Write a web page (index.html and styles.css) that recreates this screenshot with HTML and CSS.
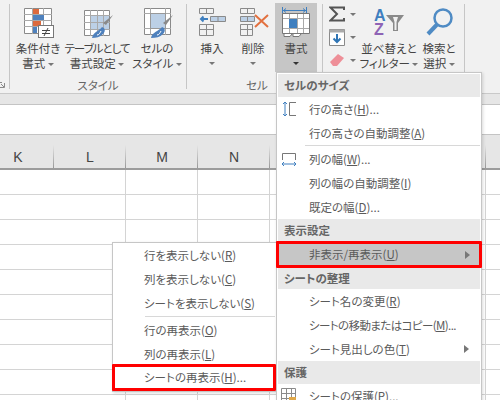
FILE: index.html
```html
<!DOCTYPE html>
<html lang="ja">
<head>
<meta charset="utf-8">
<title>Excel 書式メニュー</title>
<link rel="stylesheet" href="styles.css">
</head>
<body>
<div class="app">
  <header class="ribbon">
    <section class="group group-stub">
      <svg class="launcher" width="6" height="6" viewBox="0 0 6 6"><path d="M0 .5H3M.5 0V3M5.5 1V5.500H1M2 2L5 5" fill="none" stroke="#8a8a8a"/></svg>
    </section>
    <section class="group group-style">
      <div class="buttons">
        <div class="btn w56">
          <svg class="icon" width="32" height="32" viewBox="0 0 32 32">
            <path d="M2.500 .5H29.500V25.500H2.500Z" fill="#fff" stroke="#8a8a8a"/>
            <path d="M10.500 0V26M21.500 0V26M2 6.500H30M2 12.500H30M2 18.500H30" stroke="#a9a9a9"/>
            <rect x="11" y="1" width="6" height="5" fill="#dd6a3d"/>
            <rect x="11" y="7" width="11" height="5" fill="#4f81bd"/>
            <rect x="11" y="13" width="8" height="5" fill="#dd6a3d"/>
            <rect x="11" y="19" width="4" height="6" fill="#4f81bd"/>
            <rect x="16.500" y="17.500" width="15" height="12" fill="#fff" stroke="#777"/>
            <path d="M20 22.500H28M20 25.500H28M26 20L22 28" stroke="#444" fill="none"/>
          </svg>
          <span class="lbl">条件付き</span>
          <span class="lbl">書式 <i class="caret"></i></span>
        </div>
        <div class="btn w62">
          <svg class="icon" width="32" height="32" viewBox="0 0 32 32">
            <path d="M3.500 2.500H28.500V27.500H3.500Z" fill="#fff" stroke="#8a8a8a"/>
            <rect x="10" y="7" width="18" height="15" fill="#bcd0e6"/>
            <path d="M9.500 2V28M16.500 2V28M22.500 2V28M3 7.500H29M3 14.500H29M3 21.500H29" stroke="#a9a9a9"/>
            <path d="M32 7L25 17L22 15Z" fill="#8a8a8a"/>
            <path d="M11 30C12 24 18 23 21 19C24 20 25 23 22 26C19 29 15 30 11 30Z" fill="#4f81bd"/>
            <path d="M16 27C18 27 19 25 20 23" stroke="#fff" fill="none"/>
          </svg>
          <span class="lbl squeeze">テーブルとして</span>
          <span class="lbl">書式設定 <i class="caret"></i></span>
        </div>
        <div class="btn w58">
          <svg class="icon" width="32" height="32" viewBox="0 0 32 32">
            <path d="M3.500 .5H29.500V26.500H3.500Z" fill="#fff" stroke="#8a8a8a"/>
            <path d="M9.500 0V27M24.500 0V27M3 5.500H30M3 20.500H30" stroke="#a9a9a9"/>
            <rect x="9.500" y="5.500" width="15" height="15" fill="#bcd0e6" stroke="#999"/>
            <path d="M32 7L25 17L22 15Z" fill="#8a8a8a"/>
            <path d="M10 30C11 24 18 23 21 19C24 20 25 23 22 26C19 29 15 30 10 30Z" fill="#4f81bd"/>
            <path d="M16 27C18 27 19 25 20 23" stroke="#fff" fill="none"/>
          </svg>
          <span class="lbl">セルの</span>
          <span class="lbl">スタイル <i class="caret"></i></span>
        </div>
      </div>
      <div class="group-name">スタイル</div>
    </section>
    <section class="group group-cell">
      <div class="buttons">
        <div class="btn w40">
          <svg class="icon" width="28" height="32" viewBox="0 0 28 32">
            <path d="M1.500 .5H15.500V5.500H1.500ZM8.500 0V6" fill="none" stroke="#8a8a8a"/>
            <path d="M12.500 8.500H27.500V13.500H12.500ZM20 8V14" fill="#bcd0e6" stroke="#8a8a8a"/>
            <path d="M10 11H3M5.500 8.500L3 11L5.500 13.500" fill="none" stroke="#3f7fbf" stroke-width="2"/>
            <path d="M1.500 16.500H15.500V27.500H1.500ZM8.500 16V28M1 21.500H16" fill="none" stroke="#8a8a8a"/>
          </svg>
          <span class="lbl">挿入</span>
          <i class="caret caret-row"></i>
        </div>
        <div class="btn w42">
          <svg class="icon" width="32" height="32" viewBox="0 0 32 32">
            <path d="M3.500 .5H17.500V5.500H3.500ZM10.500 0V6" fill="none" stroke="#8a8a8a"/>
            <path d="M3.500 8.500H17.500V13.500H3.500ZM10.500 8V14" fill="#bcd0e6" stroke="#8a8a8a"/>
            <path d="M3.500 16.500H15.500V27.500H3.500ZM10.500 16V28M3 21.500H16" fill="none" stroke="#8a8a8a"/>
            <path d="M18 7L31 19M31 7L18 19" stroke="#e2703f" stroke-width="2"/>
          </svg>
          <span class="lbl">削除</span>
          <i class="caret caret-row"></i>
        </div>
        <div class="btn btn-on">
          <svg class="icon" width="32" height="33" viewBox="0 0 32 33">
            <path d="M3 6.500H26M6 4.500L3.500 6.500L6 8.500M23 4.500L25.500 6.500L23 8.500M2.500 3V10M26.500 3V10" fill="none" stroke="#3f7fbf"/>
            <path d="M2.500 9.500H29.500V29.500H2.500Z" fill="#fff" stroke="#777"/>
            <path d="M9.500 10V29M17.500 10V29M23.500 10V29M3 14.500H29M3 24.500H29" stroke="#a9a9a9"/>
            <rect x="9" y="15" width="8" height="9" fill="#3f7fbf"/>
            <path d="M4 30V32.500H10L12 30M13 30V32.500H19L21 30" fill="#fff" stroke="#777"/>
          </svg>
          <span class="lbl">書式</span>
          <i class="caret caret-row dark"></i>
        </div>
      </div>
      <div class="group-name">セル</div>
    </section>
    <section class="group group-edit">
      <div class="buttons">
        <div class="small-col">
          <div class="small">
            <svg width="16" height="16" viewBox="0 0 16 16"><path d="M15 4V1.500H1.500L8 8L1.500 14.500H15V12" fill="none" stroke="#555" stroke-width="2"/></svg>
            <i class="caret"></i>
          </div>
          <div class="small">
            <svg width="16" height="17" viewBox="0 0 16 17"><path d="M.5 .5H15.500V16.500H.5Z" fill="#fff" stroke="#8a8a8a"/><path d="M.5 .5H15.500V3.500H.5Z" fill="#aaa"/><path d="M8 5V13M4.500 9.500L8 13L11.500 9.500" fill="none" stroke="#2f75b5" stroke-width="2"/></svg>
            <i class="caret"></i>
          </div>
          <div class="small">
            <svg width="16" height="14" viewBox="0 0 16 14"><path d="M1 9L9 1L15 5L8 13H4Z" fill="#ee8f98"/></svg>
            <i class="caret"></i>
          </div>
        </div>
        <div class="btn w50">
          <svg class="icon" width="32" height="32" viewBox="0 0 32 32">
            <text class="az a" x="1" y="13">A</text>
            <text class="az z" x="1" y="27">Z</text>
            <path d="M13 7H31L25 15V23H20V15Z" fill="#8a8a8a"/>
            <path d="M20 9H25L23.500 14V22H21.500V14Z" fill="#f1f1f1"/>
          </svg>
          <span class="lbl">並べ替えと</span>
          <span class="lbl">フィルター <i class="caret"></i></span>
        </div>
        <div class="btn w50">
          <svg class="icon" width="32" height="32" viewBox="0 0 32 32">
            <circle cx="20" cy="10" r="8.500" fill="none" stroke="#4f8bc4" stroke-width="2.500"/>
            <path d="M14 16.500L5 26" stroke="#4f8bc4" stroke-width="4"/>
          </svg>
          <span class="lbl">検索と</span>
          <span class="lbl">選択 <i class="caret"></i></span>
        </div>
      </div>
    </section>
  </header>

  <div class="band"></div>
  <div class="formula"></div>

  <div class="col-head">
    <div class="col col-first">K</div>
    <div class="col">L</div>
    <div class="col">M</div>
    <div class="col">N</div>
    <div class="col"></div>
    <div class="col"></div>
    <div class="col"></div>
  </div>
  <div class="cells"></div>

  <nav class="menu menu-sub">
    <div class="item plain">行を表示しない(<u>R</u>)</div>
    <div class="item plain">列を表示しない(<u>C</u>)</div>
    <div class="item plain">シートを表示しない(<u>S</u>)</div>
    <div class="sep"></div>
    <div class="item plain">行の再表示(<u>O</u>)</div>
    <div class="item plain">列の再表示(<u>L</u>)</div>
    <div class="item plain marked">シートの再表示(<u>H</u>)...</div>
  </nav>

  <nav class="menu menu-main">
    <div class="head tall">セルのサイズ</div>
    <div class="item">
      <svg class="mi" width="16" height="16" viewBox="0 0 16 16"><path d="M4 1V15M2 3L4 1L6 3M2 13L4 15L6 13" fill="none" stroke="#3f7fbf"/><path d="M15 1.500H8.500V14.500H15" fill="none" stroke="#777"/></svg>
      行の高さ(<u>H</u>)...
    </div>
    <div class="item">行の高さの自動調整(<u>A</u>)</div>
    <div class="sep"></div>
    <div class="item">
      <svg class="mi" width="16" height="16" viewBox="0 0 16 16"><path d="M1.500 9V2.500H14.500V9" fill="none" stroke="#777"/><path d="M1 13H15M3 11L1 13L3 15M13 11L15 13L13 15" fill="none" stroke="#3f7fbf"/></svg>
      列の幅(<u>W</u>)...
    </div>
    <div class="item">列の幅の自動調整(<u>I</u>)</div>
    <div class="item">既定の幅(<u>D</u>)...</div>
    <div class="head">表示設定</div>
    <div class="item marked selected">非表示/再表示(<u>U</u>)<i class="tri"></i></div>
    <div class="head short">シートの整理</div>
    <div class="item">シート名の変更(<u>R</u>)</div>
    <div class="item tight">シートの移動またはコピー(<u>M</u>)...</div>
    <div class="item">シート見出しの色(<u>T</u>)<i class="tri"></i></div>
    <div class="head tall">保護</div>
    <div class="item">
      <svg class="mi" width="16" height="16" viewBox="0 0 16 16"><path d="M.5 .5H14.500V14.500H.5ZM5.500 0V15M10.500 0V15M0 5.500H15M0 10.500H15" fill="#fff" stroke="#8a8a8a"/><rect x="8" y="9" width="7" height="6" fill="#e0a84a"/></svg>
      シートの保護(<u>P</u>)...
    </div>
  </nav>
</div>
</body>
</html>
```

FILE: styles.css
```css
* { box-sizing: border-box; }
html, body { margin: 0; padding: 0; }
body {
  width: 500px;
  height: 400px;
  overflow: hidden;
  background: #fff;
  font-family: "Noto Sans CJK JP", "Noto Sans", sans-serif;
  font-size: 11.5px;
  color: #555;
  font-feature-settings: "palt";
}
.app { position: relative; width: 500px; height: 400px; overflow: hidden; }

/* ribbon */
.ribbon {
  display: flex;
  height: 94px;
  background: #f1f1f1;
  border-bottom: 1px solid #c9c9c9;
}
.group {
  display: flex;
  flex-direction: column;
  border-right: 1px solid #c6c6c6;
  margin: 4px 0;
}
.group-stub { width: 10px; justify-content: flex-end; align-items: flex-start; }
.launcher { margin-left: -1px; margin-bottom: 1px; }
.group-style { width: 177px; }
.group-cell { width: 136px; padding-left: 5px; }
.group-edit { width: 142px; padding-left: 6px; }
.buttons { display: flex; height: 68px; flex: none; }
.btn {
  display: flex;
  flex-direction: column;
  align-items: center;
  width: 42px;
  flex: none;
  color: #444;
  white-space: nowrap;
}
.w40 { width: 40px; }
.w42 { width: 42px; }
.w50 { width: 50px; }
.w56 { width: 56px; }
.w58 { width: 58px; }
.w62 { width: 62px; }
.btn-on { background: #c6c6c6; margin-left: 1px; height: 69px; margin-top: -1px; }
.icon { display: block; margin: 4px 0 1px; flex: none; }
.btn-on .icon { margin: 1px 0 4px; }
.lbl { display: block; line-height: 15px; }
.squeeze { letter-spacing: -1px; }
.group-name {
  text-align: center;
  line-height: 12px;
  margin-top: 7px;
  color: #666;
}
.caret {
  display: inline-block;
  width: 0;
  height: 0;
  border: 3px solid transparent;
  border-top-color: #777;
  border-bottom-width: 0;
  vertical-align: middle;
}
.caret-row { display: block; margin-top: 6px; }
.dark { border-top-color: #333; }
.small-col { display: flex; flex-direction: column; width: 35px; flex: none; gap: 5px; padding-top: 1px; }
.small { display: flex; align-items: center; gap: 5px; height: 18px; }
.az { font-family: "Liberation Sans", sans-serif; font-weight: 700; font-size: 16px; }
.a { fill: #3f7fbf; }
.z { fill: #8e63b5; }

/* sheet */
.band { height: 11px; background: #e6e6e6; border-bottom: 1px solid #c4c4c4; }
.formula { height: 30px; background: #fff; border-bottom: 1px solid #c4c4c4; }
.col-head {
  display: flex;
  height: 35px;
  background: #e6e6e6;
  border-bottom: 2px solid #9c9c9c;
}
.col {
  position: relative;
  flex: none;
  width: 72px;
  text-align: center;
  line-height: 44px;
  font-family: "Liberation Sans", sans-serif;
  font-size: 14px;
  color: #444;
}
.col-first { width: 54px; padding-right: 18px; }
.col::after {
  content: "";
  position: absolute;
  right: 0;
  top: 10px;
  bottom: 0;
  width: 1px;
  background: linear-gradient(#e6e6e6, #999);
}
.cells {
  height: 231px;
  background-color: #fff;
  background-position: 54px 0, 0 0;
  background-image:
    repeating-linear-gradient(90deg, transparent 0 71px, #d4d4d4 71px 72px),
    repeating-linear-gradient(180deg, transparent 0 24px, #d4d4d4 24px 25px);
}

/* menus */
.menu {
  position: absolute;
  background: #fff;
  border: 1px solid #c6c6c6;
  padding: 1px;
  box-shadow: 1px 1px 3px rgba(0, 0, 0, .15);
}
.menu-main { left: 276px; top: 72px; width: 206px; height: 340px; }
.menu-sub { left: 112px; top: 242px; width: 165px; height: 150px; padding-top: 0; }
.head {
  height: 22px;
  line-height: 22px;
  padding-left: 6px;
  background: #e9e9e9;
  font-weight: 700;
  color: #666;
}
.tall { height: 23px; }
.short { height: 21px; line-height: 21px; }
.item {
  position: relative;
  height: 24px;
  line-height: 24px;
  padding-left: 31px;
  color: #5a5a5a;
  white-space: nowrap;
}
.plain { padding-left: 30px; }
.tight { letter-spacing: -.6px; }
.mi { position: absolute; left: 3px; top: 4px; }
.sep { height: 1px; margin: 0 0 1px 27px; background: #d8d8d8; }
.menu-sub .sep { margin: 1px 0 1px 31px; }
.marked {
  border: 3px solid #f00;
  border-radius: 1px;
  height: 27px;
  line-height: 20px;
  margin: 0 -2px;
  padding-left: 30px;
}
.menu-sub .marked { margin: -2px -1px 0 -2px; padding-left: 29px; line-height: 21px; }
.selected { background: #c6c6c6; }
.tri {
  position: absolute;
  right: 9px;
  top: 50%;
  margin-top: -4px;
  width: 0;
  height: 0;
  border: 4px solid transparent;
  border-left: 5px solid #777;
  border-right-width: 0;
}
.item:not(.marked) .tri { right: 11px; }
```
